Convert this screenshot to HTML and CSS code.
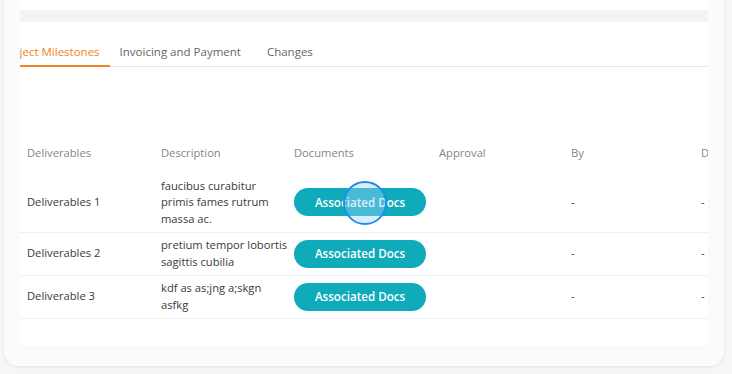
FILE: index.html
```html
<!DOCTYPE html>
<html lang="en">
<head>
    <meta charset="UTF-8">
    <meta name="viewport" content="width=device-width, initial-scale=1.0">
    <title>Project Milestones</title>
    <link rel="stylesheet" href="styles.css">
</head>
<body>
    <div class="card">
        <div class="panel">
            <div class="band"></div>
            <div class="scroller">
                <div class="content">
                    <nav class="tabs">
                        <span class="tab active">Project Milestones</span>
                        <span class="tab">Invoicing and Payment</span>
                        <span class="tab">Changes</span>
                    </nav>

                    <div class="table">
                        <div class="row head">
                            <div>Deliverables</div>
                            <div>Description</div>
                            <div>Documents</div>
                            <div>Approval</div>
                            <div>By</div>
                            <div>Date</div>
                        </div>
                        <div class="row">
                            <div>Deliverables 1</div>
                            <div>faucibus curabitur primis fames rutrum massa ac.</div>
                            <div><button class="docs-btn">Associated Docs<span class="ripple"></span></button></div>
                            <div></div>
                            <div>-</div>
                            <div>-</div>
                        </div>
                        <div class="row">
                            <div>Deliverables 2</div>
                            <div>pretium tempor lobortis sagittis cubilia</div>
                            <div><button class="docs-btn">Associated Docs</button></div>
                            <div></div>
                            <div>-</div>
                            <div>-</div>
                        </div>
                        <div class="row">
                            <div>Deliverable 3</div>
                            <div>kdf as as;jng a;skgn asfkg</div>
                            <div><button class="docs-btn">Associated Docs</button></div>
                            <div></div>
                            <div>-</div>
                            <div>-</div>
                        </div>
                    </div>
                </div>
            </div>
        </div>
    </div>
</body>
</html>
```

FILE: styles.css
```css
* {
    margin: 0;
    padding: 0;
    box-sizing: border-box;
    font-family: 'Open Sans', 'Liberation Sans', sans-serif;
}

body {
    background: #f5f6f8;
    height: 374px;
    overflow: hidden;
}

.card {
    margin: -14px 8px 0 4px;
    padding: 14px 16px 19px;
    background: #fbfbfc;
    border-radius: 14px;
    box-shadow: 0 1px 3px rgba(0,0,0,0.08);
}

.panel {
    height: 347px;
    padding-top: 10px;
    background: white;
    border-radius: 0 0 4px 4px;
    box-shadow: 0 0 2px rgba(0,0,0,0.06);
}

.band {
    height: 12px;
    background: #f1f3f5;
}

.scroller {
    overflow: hidden;
}

.content {
    width: 1000px;
    margin-left: -29px;
}

.tabs {
    display: flex;
    margin-top: 21px;
    border-bottom: 1px solid #e6e6e6;
}

.tab {
    padding: 0 10px 4px;
    font-size: 11.5px;
    line-height: 18px;
    color: #666;
}

.tab:last-child {
    margin-left: 6px;
}

.tab.active {
    color: #ef8424;
    border-bottom: 2px solid #ef8424;
    margin-bottom: -1px;
}

.table {
    margin-top: 66px;
    font-size: 11.2px;
    line-height: 16.5px;
    color: #3a3a3a;
}

.row {
    display: grid;
    grid-template-columns: 134px 133px 145px 132px 130px 130px;
    align-items: center;
    padding: 4.5px 0 4.5px 36px;
    border-bottom: 1px solid #f0f0f0;
}

.row > div {
    padding-right: 6px;
}

.row.head {
    padding-top: 12px;
    padding-bottom: 11.5px;
    border-bottom: none;
    color: #858585;
}

.docs-btn {
    position: relative;
    width: 132px;
    height: 28px;
    border: none;
    border-radius: 14px;
    background: #10abbb;
    color: white;
    font-size: 11.6px;
    font-weight: 600;
    cursor: pointer;
}

.ripple {
    position: absolute;
    left: 49px;
    top: -7px;
    width: 44px;
    height: 44px;
    border-radius: 50%;
    border: 2px solid #1e8ee8;
    background: rgba(160, 210, 250, 0.4);
}
```
